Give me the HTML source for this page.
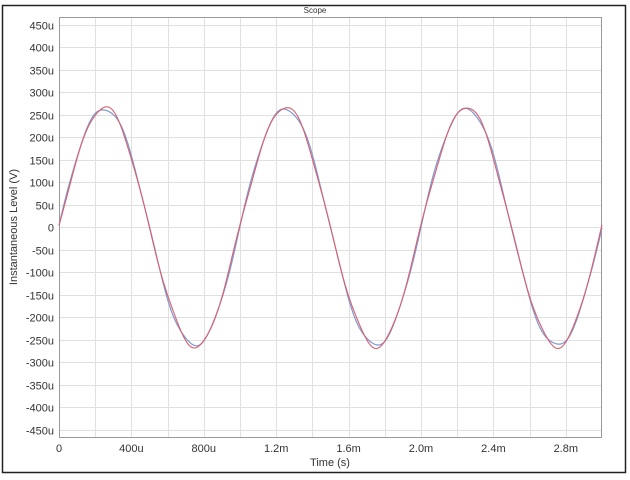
<!DOCTYPE html>
<html><head><meta charset="utf-8"><style>
body{margin:0;background:#fff;width:630px;height:480px;overflow:hidden}
svg{display:block}
text{font-family:"Liberation Sans",sans-serif;fill:#333}
</style></head><body>
<svg id="s" width="630" height="480" viewBox="0 0 630 480">
<rect x="2.5" y="5.5" width="623" height="467" fill="#fff" stroke="#222" stroke-width="1.5"/>
<g id="grid" stroke="#e0e0e0" stroke-width="1"></g>
<rect x="59.5" y="17.5" width="542" height="420" fill="none" stroke="#999"/>
<g id="labels" font-size="11"></g>
<text x="315" y="13" font-size="8" text-anchor="middle">Scope</text>
<text x="330" y="466" font-size="11" text-anchor="middle">Time (s)</text>
<text transform="translate(17,227) rotate(-90)" font-size="11" text-anchor="middle">Instantaneous Level (V)</text>
<path id="pb" fill="none" stroke="#7d99d2" stroke-width="1.2"/>
<path id="pr" fill="none" stroke="#d8606f" stroke-width="1.1"/>
</svg>
<script>
var X0=59,W=543,Y0=227,K=0.45;
function px(t){return X0+t/3*W}function py(v){return Y0-v*K}
var g=document.getElementById('grid'),L=document.getElementById('labels'),ns='http://www.w3.org/2000/svg';
function el(p,tag,a,txt){var e=document.createElementNS(ns,tag);for(var k in a)e.setAttribute(k,a[k]);if(txt)e.textContent=txt;p.appendChild(e);return e}
for(var v=-450;v<=450;v+=50){var y=Math.round(py(v))+0.5;el(g,'line',{x1:59,x2:602,y1:y,y2:y});
el(L,'text',{x:54,y:y+4,'text-anchor':'end'},v==0?'0':v+'u');}
for(var t=0.2;t<3;t+=0.2){var x=Math.round(px(t))+0.5;el(g,'line',{x1:x,x2:x,y1:17,y2:437});}
var xl=['0','400u','800u','1.2m','1.6m','2.0m','2.4m','2.8m'];
for(var i=0;i<8;i++){el(L,'text',{x:px(i*0.4),y:452,'text-anchor':'middle'},xl[i]);}
function tr(id,a,h,ph,seed){var d='';for(var i=0;i<=543;i++){var t=i/543*3;var v=a*Math.sin(2*Math.PI*t)+h*Math.sin(6*Math.PI*t+ph)+3*Math.sin(37*t+seed);d+=(i?'L':'M')+(X0+i).toFixed(1)+' '+py(v).toFixed(1);}document.getElementById(id).setAttribute('d',d);}
tr('pb',265,3,0.3,1);tr('pr',264,4,2.4,3);
</script>
</body></html>
